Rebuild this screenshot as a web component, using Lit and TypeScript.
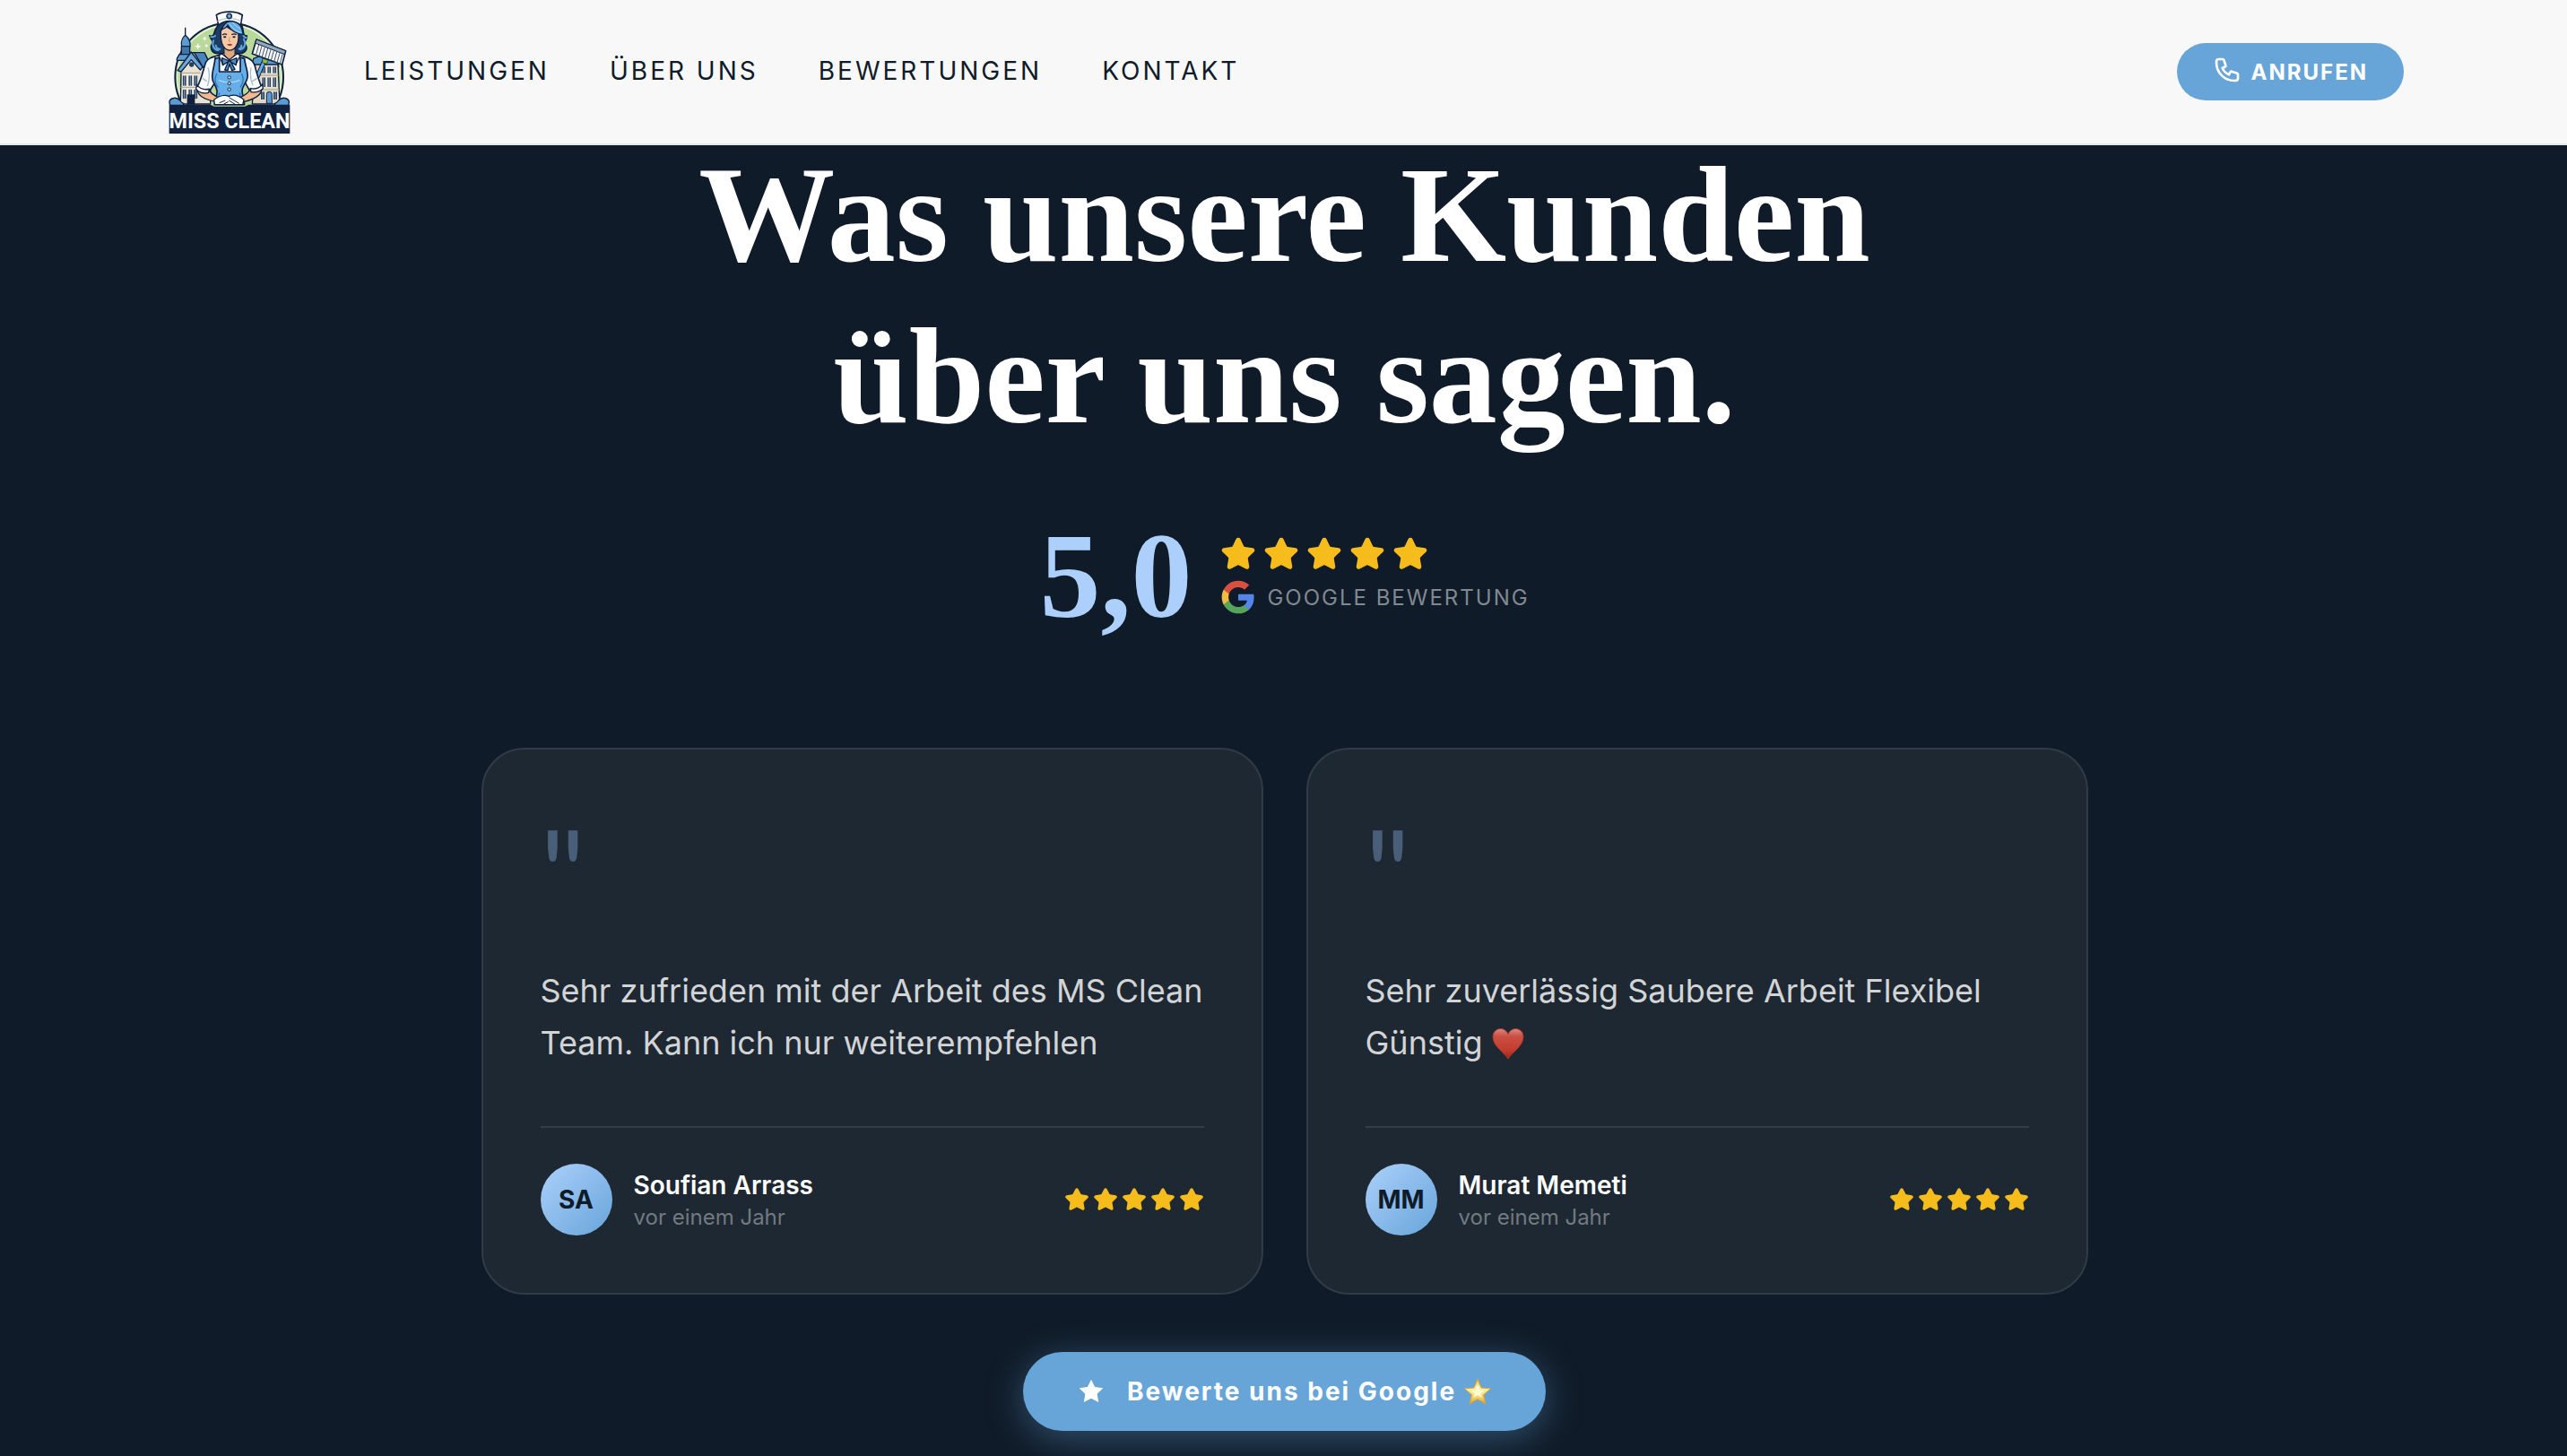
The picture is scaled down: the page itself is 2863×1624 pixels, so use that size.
import { LitElement, html, css, svg } from "lit";
import { customElement, property } from "lit/decorators.js";

interface Review {
  initials: string;
  name: string;
  when: string;
  text: string;
  heart: boolean;
}

const NAV = ["Leistungen", "Über uns", "Bewertungen", "Kontakt"];

const REVIEWS: Review[] = [
  {
    initials: "SA",
    name: "Soufian Arrass",
    when: "vor einem Jahr",
    text: "Sehr zufrieden mit der Arbeit des MS Clean Team. Kann ich nur weiterempfehlen",
    heart: false,
  },
  {
    initials: "MM",
    name: "Murat Memeti",
    when: "vor einem Jahr",
    text: "Sehr zuverlässig Saubere Arbeit Flexibel Günstig",
    heart: true,
  },
];

@customElement("star-row")
class StarRow extends LitElement {
  @property({ type: Number }) count = 5;

  static styles = css`
    :host {
      display: flex;
      gap: var(--star-gap, 4px);
    }
    .star {
      display: block;
      width: var(--star-size, 28px);
      height: var(--star-size, 28px);
      fill: #f6bc1c;
      stroke: #f6bc1c;
      stroke-width: 2;
      stroke-linejoin: round;
    }
  `;

  render() {
    return Array.from(
      { length: this.count },
      () => html`<svg class="star" viewBox="0 0 24 24" aria-hidden="true">
        <path
          d="M11.525 2.295a.53.53 0 0 1 .95 0l2.31 4.679a2.123 2.123 0 0 0 1.595 1.16l5.166.756a.53.53 0 0 1 .294.904l-3.736 3.638a2.123 2.123 0 0 0-.611 1.878l.882 5.14a.53.53 0 0 1-.771.56l-4.618-2.428a2.122 2.122 0 0 0-1.973 0L6.396 21.01a.53.53 0 0 1-.77-.56l.881-5.139a2.122 2.122 0 0 0-.611-1.879L2.16 9.795a.53.53 0 0 1 .294-.906l5.165-.755a2.122 2.122 0 0 0 1.597-1.16z"
        />
      </svg>`
    );
  }
}

@customElement("brand-logo")
class BrandLogo extends LitElement {
  static styles = css`
    :host {
      display: block;
    }
    .logo {
      display: block;
      width: 142px;
      height: 142px;
    }
    .word {
      font-family: Roboto, "Liberation Sans", sans-serif;
      font-weight: 700;
      font-size: 70px;
      fill: #ffffff;
    }
  `;

  private windows(xs: number[], y: number, w: number, h: number) {
    return xs.map(
      (x) => svg`<rect x=${x} y=${y} width=${w} height=${h} fill="#24405f" stroke="#fff" stroke-width="2"/>
        <path d=${`M${x + w / 2} ${y}v${h}`} stroke="#d9d4c6" stroke-width="2"/>`
    );
  }

  render() {
    return html`<svg class="logo" viewBox="42 27 426 426" role="img" aria-label="Miss Clean">
      <circle cx="257" cy="258" r="181" fill="#b9d99b" stroke="#10203f" stroke-width="6" />
      <circle cx="257" cy="258" r="174" fill="none" stroke="#e9f3de" stroke-width="4" />
      <path d="M152 144l3 8 8 3-8 3-3 8-3-8-8-3 8-3zM175 121l2 6 6 2-6 2-2 6-2-6-6-2 6-2zM181 146l2 5 5 2-5 2-2 5-2-5-5-2 5-2z" fill="#fff" />

      <!-- left town house with spire -->
      <g stroke="#10203f" stroke-width="4" stroke-linejoin="round">
        <path d="M110 92v30" />
        <path d="M98 156c-4-18 4-32 12-38 10 8 18 20 16 38z" fill="#5b9bd0" />
        <rect x="97" y="155" width="28" height="40" fill="#3f76a8" />
        <path d="M82 196l8-14h36v20H82z" fill="#5b9bd0" />
        <path d="M96 232l38-56 40 2 20 40v130H94z" fill="#e9e2d2" />
        <path d="M84 236l46-62 38 50-8 10-30-34-34 40z" fill="#6ba8da" />
        <path d="M140 176h34l18 36-22 14z" fill="#4a85bb" />
      </g>
      <circle cx="131" cy="216" r="8" fill="#24405f" />
      ${this.windows([100, 120, 138], 252, 14, 36)} ${this.windows([100, 120, 138], 298, 14, 34)}
      <rect x="116" y="316" width="26" height="34" fill="#10203f" />
      <path d="M94 244h66M94 292h60" stroke="#a99f8a" stroke-width="3" />

      <!-- right town house -->
      <g stroke="#10203f" stroke-width="4" stroke-linejoin="round">
        <path d="M338 196l20-8 30 4 34 18v14h-90z" fill="#5b9bd0" />
        <path d="M344 216h76l6 132h-92z" fill="#e2d6bf" />
      </g>
      ${this.windows([366, 384, 402], 222, 13, 24)} ${this.windows([366, 384, 402], 258, 13, 34)}
      ${this.windows([362, 404], 306, 14, 28)}
      <path d="M382 346v-30a9 9 0 0 1 18 0v30z" fill="#5b9bd0" stroke="#10203f" stroke-width="3" />
      <path d="M346 252h76M346 300h78" stroke="#a99f8a" stroke-width="3" />

      <!-- brush -->
      <path d="M374 204l-32 74" stroke="#10203f" stroke-width="15" stroke-linecap="round" />
      <path d="M374 204l-32 74" stroke="#6bb0e6" stroke-width="9" stroke-linecap="round" />
      <path d="M368 196l20 4-6 14-14-4z" fill="#8cbf45" stroke="#10203f" stroke-width="2" />
      <path d="M348 132l98 38-12 46-100-36z" fill="#f4f6f8" stroke="#10203f" stroke-width="5" stroke-linejoin="round" />
      <path d="M348 132l98 38-4 12-98-38z" fill="#90a9bd" stroke="#10203f" stroke-width="3" />
      <path d="M356 150l-9 32M366 154l-9 32M376 158l-9 32M386 162l-9 32M396 166l-9 32M406 170l-9 32M416 174l-9 32M426 178l-9 32M435 182l-8 30" stroke="#43556b" stroke-width="3" />

      <!-- hair -->
      <path d="M216 90c-14 20-6 34-24 30 4 16 14 14 8 26-10 16 2 32 14 32 18 8 30-6 44-6 14 0 24 14 42 6 14-4 20-18 10-30-4-12 6-12 6-28-18 0-8-22-18-36-18-22-66-20-82 6z" fill="#1c3c63" stroke="#10203f" stroke-width="5" />
      <path d="M204 136c-6 16 2 30 16 32M306 132c8 16 2 30-12 34M210 120c-6 4-8 4-14 4M304 118c2 6 6 8 10 8M212 152c2 8 8 12 14 12M298 152c0 6-4 10-8 12" stroke="#5ea6de" stroke-width="6" fill="none" stroke-linecap="round" />
      <!-- neck and face -->
      <path d="M240 156h36v26l-18 24-18-24z" fill="#e2a67c" stroke="#10203f" stroke-width="3" />
      <path d="M229 104c-2 30 4 48 14 58 10 8 22 8 32-1 12-12 15-30 12-52-18-6-34-14-42-24-8 4-13 10-16 19z" fill="#f6c9a4" stroke="#10203f" stroke-width="4" />
      <path d="M234 117q8-6 15-1M265 116q8-5 16 0" stroke="#10203f" stroke-width="4" fill="none" />
      <ellipse cx="242" cy="124" rx="5" ry="3" fill="#10203f" />
      <ellipse cx="273" cy="124" rx="5" ry="3" fill="#10203f" />
      <path d="M259 124l-3 14 6 1" stroke="#b06f4b" stroke-width="2" fill="none" />
      <path d="M249 149q9-5 19 0-9 9-19 0z" fill="#b63a3c" />
      <path d="M232 98c8-20 20-30 40-28 18 4 28 20 32 46-20-2-40-12-52-32-4 8-10 12-20 14z" fill="#63ace6" stroke="#10203f" stroke-width="4" />
      <path d="M258 80c8 14 22 24 38 30M268 76c8 8 18 16 26 20" stroke="#a9d8fa" stroke-width="3" fill="none" />
      <!-- cap -->
      <path d="M214 50c22-14 64-14 87 0l-6 34c-20-18-54-18-74 0z" fill="#fff" stroke="#10203f" stroke-width="5" stroke-linejoin="round" />
      <path d="M218 72c20-14 58-14 78 0" stroke="#b9cfe2" stroke-width="4" fill="none" />
      <circle cx="257" cy="54" r="9" fill="#2f679a" stroke="#10203f" stroke-width="3" />
      <path d="M257 49v10M252 54h10" stroke="#cfe5f7" stroke-width="2" />

      <!-- blouse -->
      <path d="M226 184c-24 6-44 10-50 32-8 26-12 50-26 74 4 12 20 20 40 16l26-40h88l22 38c18 4 34-2 40-12-12-26-18-50-24-74-8-22-30-28-52-34l-30 18z" fill="#f8fafc" stroke="#10203f" stroke-width="5" stroke-linejoin="round" />
      <path d="M186 226c6 20 6 40-2 62M330 226c-4 20-2 42 6 60M168 262l14 10M350 262l-16 10" stroke="#a8bccd" stroke-width="4" fill="none" />
      <!-- apron -->
      <path d="M210 196l14-4v48h70v-48l14 4c2 26 14 44 10 64-4 20-18 26-18 44 0 14 8 24 8 46H208c0-20 10-32 8-46-2-18-16-26-16-46 0-20 8-40 10-64z" fill="#66aee8" stroke="#10203f" stroke-width="5" stroke-linejoin="round" />
      <path d="M216 246c-8 14-10 30 4 46M298 246c8 14 8 30-4 46M224 310c-2 10-4 20-6 34M292 310c2 10 4 20 6 34" stroke="#2f76b5" stroke-width="4" fill="none" />
      <path d="M222 268q34 16 70 0" stroke="#a9d8fa" stroke-width="4" fill="none" />
      <g fill="#cfe8fb" stroke="#10203f" stroke-width="3">
        <circle cx="257" cy="259" r="5" />
        <circle cx="257" cy="279" r="5" />
        <circle cx="257" cy="299" r="5" />
      </g>
      <!-- collar and bow -->
      <path d="M230 178l27 22-22 14-12-26zM286 178l-29 22 22 14 14-26z" fill="#fff" stroke="#10203f" stroke-width="4" stroke-linejoin="round" />
      <path d="M257 204l-24-10 2 24zM257 204l25-10-2 24zM254 206l-12 28 10 2 6-22 8 22 10-4-14-26z" fill="#4b90c9" stroke="#10203f" stroke-width="4" stroke-linejoin="round" />
      <!-- arms, cuffs, gloves -->
      <path d="M150 300c2 22 30 34 60 40l14-12c-16-8-30-14-36-30z" fill="#f0b98f" stroke="#10203f" stroke-width="4" />
      <path d="M366 298c-2 22-30 36-60 42l-16-12c18-8 32-16 38-30z" fill="#f0b98f" stroke="#10203f" stroke-width="4" />
      <path d="M148 284c10 12 26 18 42 14l-2 12c-16 4-32 0-42-12zM368 282c-10 12-24 18-40 14l2 12c16 2 30-2 40-12z" fill="#fff" stroke="#10203f" stroke-width="4" />
      <path d="M206 334c14-12 34-18 50-12 16-8 36 0 50 12l-4 16H208z" fill="#fff" stroke="#10203f" stroke-width="4" />
      <path d="M224 344l20-8M236 350l18-10M290 346l-34-20M278 350l-22-14" stroke="#10203f" stroke-width="3" />

      <!-- ribbon -->
      <path d="M58 348c-6-18 20-28 34-12 4 6 6 8 12 10v8H60zM456 348c6-18-20-28-34-12-4 6-6 8-12 10v8h42z" fill="#5b9bd0" stroke="#10203f" stroke-width="4" />
      <path d="M56 350h138l12 6h104l12-6h138v97H56z" fill="#10203f" />
      <text class="word" x="258" y="428" text-anchor="middle">MISS CLEAN</text>
    </svg>`;
  }
}

@customElement("review-card")
class ReviewCard extends LitElement {
  @property({ attribute: false }) review!: Review;

  static styles = css`
    :host {
      display: block;
    }
    .card {
      box-sizing: border-box;
      height: 100%;
      padding: 64px;
      border: 2px solid #303b46;
      border-radius: 48px;
      background: #1e2832;
    }
    .mark {
      margin-bottom: 32px;
      color: #495e78;
      font: 400 136px/144px Lato, "Liberation Serif", serif;
    }
    .text {
      margin: 0 0 64px;
      color: #d2d4d6;
      font-size: 36px;
      line-height: 58px;
    }
    .heart {
      width: 36px;
      height: 36px;
      vertical-align: -6px;
    }
    .author {
      display: flex;
      align-items: center;
      gap: 24px;
      padding-top: 40px;
      border-top: 2px solid #343e49;
    }
    .avatar {
      display: grid;
      place-items: center;
      width: 80px;
      height: 80px;
      border-radius: 50%;
      background: linear-gradient(135deg, #acd0fb, #67a5d9);
      color: #0f1b28;
      font-size: 28px;
      font-weight: 700;
    }
    .who {
      flex: 1;
    }
    .name {
      color: #ffffff;
      font-size: 28px;
      font-weight: 600;
      line-height: 40px;
    }
    .when {
      color: #727980;
      font-size: 24px;
      line-height: 32px;
    }
  `;

  render() {
    const r = this.review;
    return html`<article class="card">
      <div class="mark" aria-hidden="true">"</div>
      <p class="text">
        ${r.text}
        ${r.heart
          ? html`<svg class="heart" viewBox="0 0 36 36" role="img" aria-label="Herz">
              <defs>
                <linearGradient id="hg" x1="0" y1="0" x2="0" y2="1">
                  <stop offset="0" stop-color="#dc8a80" />
                  <stop offset=".25" stop-color="#cb4f42" />
                  <stop offset=".7" stop-color="#c43c30" />
                  <stop offset="1" stop-color="#9a2419" />
                </linearGradient>
              </defs>
              <path d="M18 35C14 28 1 21 1 10.500 1 5 5 1.500 9.500 1.500c4 0 7 2.500 8.500 6 1.500-3.500 4.500-6 8.500-6C31 1.500 35 5 35 10.500 35 21 22 28 18 35z" fill="url(#hg)" stroke="#a8382d" />
            </svg>`
          : ""}
      </p>
      <div class="author">
        <div class="avatar" aria-hidden="true">${r.initials}</div>
        <div class="who">
          <div class="name">${r.name}</div>
          <div class="when">${r.when}</div>
        </div>
        <star-row></star-row>
      </div>
    </article>`;
  }
}

@customElement("app-root")
class AppRoot extends LitElement {
  static styles = css`
    :host {
      display: block;
      min-height: 100vh;
      overflow: hidden;
      background: #0f1b28;
      font-family: Inter, "Liberation Sans", sans-serif;
    }
    .header {
      position: sticky;
      top: 0;
      z-index: 1;
      display: flex;
      align-items: center;
      gap: 80px;
      height: 160px;
      padding: 0 182px 0 184px;
      border-bottom: 2px solid #e2e7ea;
      background: #f8f8f8;
    }
    .nav {
      display: flex;
      flex: 1;
      gap: 67px;
      padding-bottom: 2px;
    }
    .link {
      color: #0f1b28;
      font-size: 28px;
      line-height: 40px;
      letter-spacing: 3px;
      text-decoration: none;
      text-transform: uppercase;
    }
    .call {
      display: flex;
      align-items: center;
      gap: 11px;
      height: 64px;
      padding: 0 40px;
      border-radius: 32px;
      background: #67a5d9;
      color: #ffffff;
      font-size: 24px;
      font-weight: 700;
      letter-spacing: 2px;
      text-decoration: none;
      text-transform: uppercase;
    }
    .phone {
      width: 32px;
      height: 32px;
      margin-bottom: 4px;
      fill: none;
      stroke: currentColor;
      stroke-width: 2;
      stroke-linecap: round;
      stroke-linejoin: round;
    }
    .main {
      display: flex;
      flex-direction: column;
      align-items: center;
      margin-top: -12px;
      padding: 0 48px 26px 50px;
    }
    .title {
      margin: 0 0 64px;
      color: #ffffff;
      font: 700 152px/180px "Liberation Serif", serif;
      text-align: center;
    }
    .rating {
      display: flex;
      align-items: center;
      gap: 32px;
      margin-bottom: 124px;
    }
    .score {
      color: #acd0fb;
      font: 700 136px/136px "Liberation Serif", serif;
    }
    .detail {
      display: flex;
      flex-direction: column;
      gap: 8px;
    }
    .big {
      --star-size: 40px;
      --star-gap: 8px;
    }
    .source {
      display: flex;
      align-items: center;
      gap: 12px;
      color: #82888f;
      font-size: 24px;
      letter-spacing: 2px;
      text-transform: uppercase;
    }
    .google {
      width: 40px;
      height: 40px;
    }
    .cards {
      display: grid;
      grid-template-columns: 1fr 1fr;
      gap: 48px;
      width: 100%;
      max-width: 1792px;
      margin-bottom: 64px;
    }
    .cta {
      display: flex;
      align-items: center;
      gap: 24px;
      height: 88px;
      padding: 0 60px;
      border-radius: 44px;
      background: #67a5d9;
      box-shadow: 0 8px 40px rgba(103, 165, 217, 0.4);
      color: #ffffff;
      font-size: 28px;
      font-weight: 700;
      letter-spacing: 2px;
      text-decoration: none;
    }
    .solid {
      width: 32px;
      height: 32px;
      fill: currentColor;
    }
    .label {
      display: flex;
      align-items: center;
      gap: 8px;
    }
    .glow {
      width: 32px;
      height: 32px;
    }
  `;

  render() {
    return html`
      <header class="header">
        <brand-logo></brand-logo>
        <nav class="nav">${NAV.map((n) => html`<a class="link" href="#">${n}</a>`)}</nav>
        <a class="call" href="#">
          <svg class="phone" viewBox="0 0 24 24" aria-hidden="true">
            <path
              d="M3 5a2 2 0 0 1 2-2h3.280a1 1 0 0 1 .948.684l1.498 4.493a1 1 0 0 1-.502 1.210l-2.257 1.130a11.042 11.042 0 0 0 5.516 5.516l1.130-2.257a1 1 0 0 1 1.210-.502l4.493 1.498a1 1 0 0 1 .684.949V19a2 2 0 0 1-2 2h-1C9.716 21 3 14.284 3 6V5z"
            />
          </svg>
          Anrufen
        </a>
      </header>
      <main class="main">
        <h2 class="title">Was unsere Kunden<br />über uns sagen.</h2>
        <div class="rating">
          <div class="score">5,0</div>
          <div class="detail">
            <star-row class="big"></star-row>
            <div class="source">
              <svg class="google" viewBox="0 0 24 24" aria-hidden="true">
                <path fill="#5585e8" d="M22.56 12.25c0-.78-.07-1.530-.2-2.250H12v4.260h5.920c-.26 1.370-1.040 2.530-2.210 3.310v2.770h3.570c2.080-1.920 3.280-4.740 3.280-8.090z" />
                <path fill="#57a55c" d="M12 23c2.970 0 5.460-.98 7.280-2.660l-3.570-2.770c-.98.66-2.230 1.060-3.710 1.060-2.860 0-5.290-1.930-6.160-4.530H2.180v2.840C3.990 20.530 7.700 23 12 23z" />
                <path fill="#f2bb42" d="M5.840 14.090c-.22-.66-.35-1.360-.35-2.090s.13-1.430.35-2.090V7.070H2.180C1.430 8.550 1 10.220 1 12s.43 3.450 1.180 4.930l3.660-2.840z" />
                <path fill="#d95040" d="M12 5.380c1.620 0 3.060.56 4.210 1.640l3.150-3.150C17.450 2.090 14.970 1 12 1 7.700 1 3.990 3.470 2.180 7.070l3.660 2.840c.87-2.600 3.300-4.530 6.160-4.530z" />
              </svg>
              Google Bewertung
            </div>
          </div>
        </div>
        <section class="cards">
          ${REVIEWS.map((r) => html`<review-card .review=${r}></review-card>`)}
        </section>
        <a class="cta" href="#">
          <svg class="solid" viewBox="0 0 24 24" aria-hidden="true">
            <path d="M12 2l3.090 6.260L22 9.270l-5 4.870 1.180 6.880L12 17.770l-6.180 3.250L7 14.140 2 9.270l6.910-1.010z" />
          </svg>
          <span class="label">
            Bewerte uns bei Google
            <svg class="glow" viewBox="0 0 32 32" role="img" aria-label="Stern">
              <defs>
                <linearGradient id="sg" x1="0" y1="0" x2="0" y2="1">
                  <stop offset="0" stop-color="#e9b93f" />
                  <stop offset=".35" stop-color="#fdf3a6" />
                  <stop offset=".65" stop-color="#fbe27a" />
                  <stop offset="1" stop-color="#dd9c1f" />
                </linearGradient>
              </defs>
              <path d="M16 2l4 10 10.500.8-8 7L25 30l-9-5.500L7 30l2.500-10.200-8-7L12 12z" fill="url(#sg)" stroke="#dba638" stroke-linejoin="round" />
              <path d="M16 9l2.200 5.500 5 .6-4 3.600 1.200 4L16 20l-4.400 2.700 1.200-4-4-3.600 5-.6z" fill="#fffbd8" />
            </svg>
          </span>
        </a>
      </main>
    `;
  }
}
